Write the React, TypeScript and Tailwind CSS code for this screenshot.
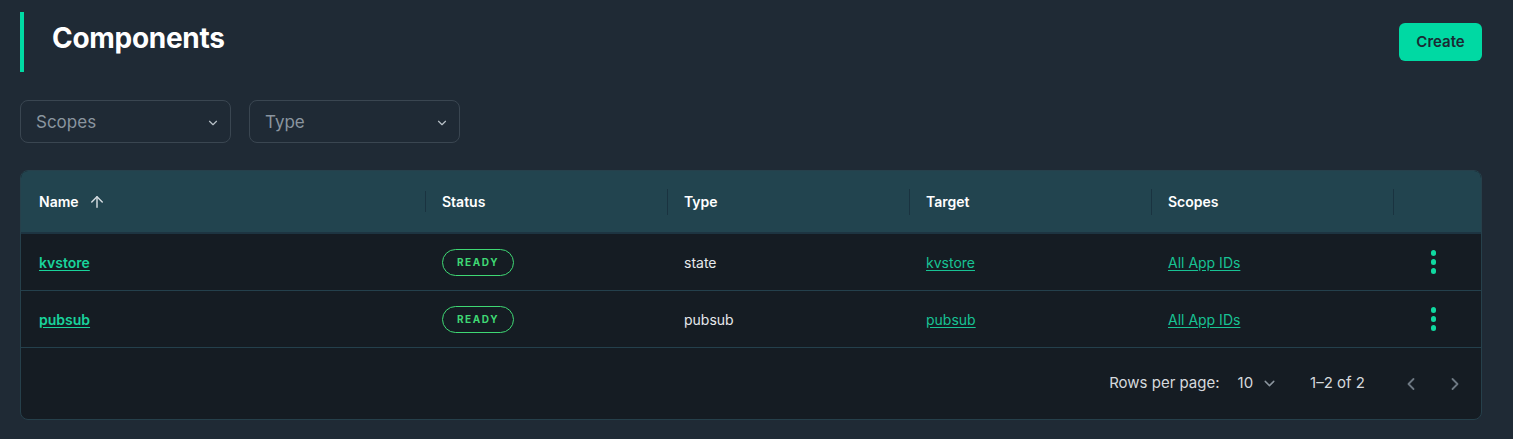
import { ArrowUp, ChevronDown, ChevronLeft, ChevronRight } from 'lucide-react';

interface ComponentRow {
  name: string;
  type: string;
  target: string;
  scopes: string;
}

const rows: ComponentRow[] = [
  { name: 'kvstore', type: 'state', target: 'kvstore', scopes: 'All App IDs' },
  { name: 'pubsub', type: 'pubsub', target: 'pubsub', scopes: 'All App IDs' },
];

const columns = ['Status', 'Type', 'Target', 'Scopes'];

function FilterSelect({ label }: { label: string }) {
  return (
    <div className="flex h-[43px] w-[211px] items-center justify-between rounded-lg border border-[#3a4651] pl-[15px] pr-[10px] pt-[3px]">
      <span className="text-[17px] text-[#8a959f]">{label}</span>
      <ChevronDown size={14} strokeWidth={2} className="text-[#b8c0c7]" />
    </div>
  );
}

function Kebab() {
  return (
    <div className="flex flex-col items-center gap-[3.5px]">
      <span className="h-[5.5px] w-[5.5px] rounded-full bg-[#10d8a0]" />
      <span className="h-[5.5px] w-[5.5px] rounded-full bg-[#10d8a0]" />
      <span className="h-[5.5px] w-[5.5px] rounded-full bg-[#10d8a0]" />
    </div>
  );
}

export default function App() {
  return (
    <div className="min-h-[439px] bg-[#1f2a35] pl-5 pr-[31px] pt-3 font-['Inter',sans-serif] text-white">
      <div className="flex items-start justify-between">
        <div className="flex h-[60px] items-start border-l-4 border-[#00d9a3] pl-[28px]">
          <h1 className="mt-[9px] text-[28px] font-bold leading-[34px] tracking-[-0.3px]">Components</h1>
        </div>
        <button className="mt-[11px] h-[38px] w-[83px] rounded-md bg-[#00d9a3] text-[15px] font-semibold text-[#1b2a33]">
          Create
        </button>
      </div>

      <div className="mt-[28px] flex gap-[18px]">
        <FilterSelect label="Scopes" />
        <FilterSelect label="Type" />
      </div>

      <div className="mt-[27px] overflow-hidden rounded-lg border border-[#26404b] bg-[#151c23]">
        <div className="flex h-[63px] items-center border-b-2 border-[#1d3441] bg-[#22444f] text-[14px] font-semibold">
          <div className="flex w-[405px] items-center gap-[9px] border-r border-[#1a3340] pl-[18px]">
            <span>Name</span>
            <ArrowUp size={18} strokeWidth={2} className="text-[#d0d8dd]" />
          </div>
          {columns.map((c) => (
            <div key={c} className="flex h-[26px] w-[242px] items-center border-r border-[#1a3340] pl-[16px]">
              {c}
            </div>
          ))}
          <div className="flex-1" />
        </div>

        {rows.map((r) => (
          <div key={r.name} className="flex h-[57px] items-center border-b border-[#24404c] text-[14px]">
            <div className="w-[405px] pl-[18px]">
              <a className="font-semibold text-[#19d39b] underline underline-offset-2">{r.name}</a>
            </div>
            <div className="w-[242px] pl-[16px]">
              <span className="inline-flex h-[27px] w-[72px] items-center justify-center rounded-full border border-[#3fd874] text-[10px] font-bold tracking-[0.16em] text-[#3fd874]">
                READY
              </span>
            </div>
            <div className="w-[242px] pl-[16px] text-[#e6e9ec]">{r.type}</div>
            <div className="w-[242px] pl-[16px]">
              <a className="text-[#18c294] underline underline-offset-2">{r.target}</a>
            </div>
            <div className="w-[242px] pl-[16px]">
              <a className="text-[#18c294] underline underline-offset-2">{r.scopes}</a>
            </div>
            <div className="flex flex-1 justify-center pr-[8px]">
              <Kebab />
            </div>
          </div>
        ))}

        <div className="flex h-[71px] items-center justify-end pr-[16px] text-[15px] text-[#d5d9dd]">
          <span>Rows per page:</span>
          <div className="ml-[18px] flex items-center gap-[8px]">
            <span>10</span>
            <ChevronDown size={17} strokeWidth={2} className="text-[#8b959e]" />
          </div>
          <span className="ml-[32px]">1–2 of 2</span>
          <div className="ml-[36px] flex items-center gap-[24px] text-[#6d7882]">
            <ChevronLeft size={20} strokeWidth={2.2} />
            <ChevronRight size={20} strokeWidth={2.2} />
          </div>
        </div>
      </div>
    </div>
  );
}
